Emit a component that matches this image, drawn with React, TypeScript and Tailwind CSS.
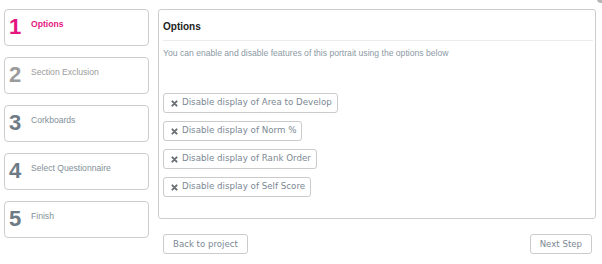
import React from "react";

const steps = [
  { n: "1", label: "Options", active: true, numCls: "text-[#e5157f]", labCls: "text-[#e5157f] font-bold" },
  { n: "2", label: "Section Exclusion", active: false, numCls: "text-[#9b9b9b]", labCls: "text-[#9b9b9b]" },
  { n: "3", label: "Corkboards", active: false, numCls: "text-[#6c7b85]", labCls: "text-[#828f98]" },
  { n: "4", label: "Select Questionnaire", active: false, numCls: "text-[#6c7b85]", labCls: "text-[#828f98]" },
  { n: "5", label: "Finish", active: false, numCls: "text-[#6c7b85]", labCls: "text-[#828f98]" },
];

const options = [
  "Disable display of Area to Develop",
  "Disable display of Norm %",
  "Disable display of Rank Order",
  "Disable display of Self Score",
];

function XIcon() {
  return (
    <svg width="7" height="7" viewBox="0 0 10 10" className="shrink-0">
      <path d="M2 2 L8 8 M8 2 L2 8" stroke="#6a6f73" strokeWidth="2.8" strokeLinecap="round" />
    </svg>
  );
}

export default function App() {
  return (
    <div
      className="relative w-[602px] h-[264px] bg-white flex pt-[9px] pl-[4px] pr-[6px] gap-[9px] overflow-hidden"
      style={{ fontFamily: '"Liberation Sans", Arial, sans-serif' }}
    >
      <div className="absolute right-[-3px] top-[-5px] w-[8px] h-[8px] rounded-full bg-[#b5b5b5]" />
      <div className="w-[145px] flex flex-col gap-[11px] shrink-0">
        {steps.map((s) => (
          <div
            key={s.n}
            className="h-[37px] border border-[#cdcdcd] rounded-[4px] flex items-start pl-[4px] bg-white"
          >
            <div className={`w-[22px] mt-[6px] text-[22px] leading-[22px] font-bold ${s.numCls}`}>{s.n}</div>
            <div className={`mt-[8px] text-[8.6px] leading-[12px] ${s.labCls}`}>{s.label}</div>
          </div>
        ))}
      </div>
      <div className="flex-1 flex flex-col">
        <div className="h-[210px] border border-[#cdcdcd] rounded-[3px] pl-[4px] pr-[2px] pt-[10px] flex flex-col">
          <div className="text-[10px] leading-[14px] font-bold text-[#222]">Options</div>
          <div className="mt-[6px] h-px bg-[#ececec]" />
          <div className="mt-[6px] text-[8.6px] leading-[12px] text-[#8c9aa4]">
            You can enable and disable features of this portrait using the options below
          </div>
          <div className="mt-[34px] flex flex-col gap-[8px] items-start">
            {options.map((o) => (
              <div
                key={o}
                className="h-[20px] border border-[#cbcbcb] rounded-[3px] flex items-center gap-[4px] pl-[7px] pr-[5px] text-[8.7px] text-[#7b8893]"
                style={{ fontFamily: '"DejaVu Sans", Verdana, sans-serif' }}
              >
                <XIcon />
                <span>{o}</span>
              </div>
            ))}
          </div>
        </div>
        <div
          className="mt-[15px] flex justify-between pl-[5px] pr-[4px] text-[8.6px] text-[#7b8893]"
          style={{ fontFamily: '"DejaVu Sans", Verdana, sans-serif' }}
        >
          <div className="h-[20px] border border-[#cbcbcb] rounded-[3px] flex items-center px-[9px]">Back to project</div>
          <div className="h-[20px] border border-[#cbcbcb] rounded-[3px] flex items-center px-[9px]">Next Step</div>
        </div>
      </div>
    </div>
  );
}
